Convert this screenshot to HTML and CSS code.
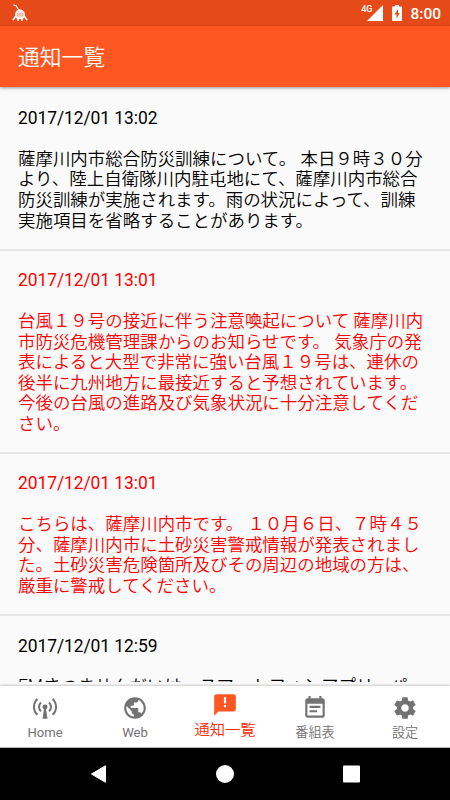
FILE: index.html
```html
<!DOCTYPE html>
<html lang="ja">

<head>

    <meta charset="UTF-8">
    <meta name="viewport" content="width=device-width, initial-scale=1.0">
    <title>通知一覧</title>

    <link rel="stylesheet" href="styles.css">

</head>

<body>

    <div class="status-bar">
        <svg class="mascot" width="16" height="18" viewBox="0 0 16 18">
            <path d="M1.5 1L4.5 2L5.5 4.5L8 6.5" fill="none" stroke="#fff" stroke-width="1.1"/>
            <path d="M3 13V10.5a5 5 0 0 1 10 0V13L11 15H5Z" fill="#fff" opacity=".9"/>
            <path d="M3.5 12.5L1 16M12.5 12.5L15 16M6.2 14V17M9.8 14V17" stroke="#fff" stroke-width="1.6"/>
            <path d="M5.8 9V12.5M8 9V12.5M10.2 9V12.5" stroke="#e64a19" stroke-width=".6"/>
        </svg>
        <div class="status-icons">
            <span class="network">4G</span>
            <svg class="signal" width="16" height="16" viewBox="0 0 16 16"><path d="M16 0V16H0Z" fill="#fff"/></svg>
            <svg class="battery" width="10" height="16" viewBox="0 0 10 16">
                <path d="M3 0H7V1.5H9Q10 1.5 10 2.5V15Q10 16 9 16H1Q0 16 0 15V2.5Q0 1.5 1 1.5H3Z" fill="#fff"/>
                <path d="M6 4L2.5 9.5H4.5V13.5L7.8 8H6Z" fill="#e64a19"/>
            </svg>
            <span class="clock">8:00</span>
        </div>
    </div>

    <header class="app-bar">
        <h1>通知一覧</h1>
    </header>

    <main class="notices">
        <article class="notice">
            <time>2017/12/01 13:02</time>
            <p>薩摩川内市総合防災訓練について。 本日９時３０分<br>より、陸上自衛隊川内駐屯地にて、薩摩川内市総合<br>防災訓練が実施されます。雨の状況によって、訓練<br>実施項目を省略することがあります。</p>
        </article>
        <article class="notice alert">
            <time>2017/12/01 13:01</time>
            <p>台風１９号の接近に伴う注意喚起について 薩摩川内<br>市防災危機管理課からのお知らせです。 気象庁の発<br>表によると大型で非常に強い台風１９号は、連休の<br>後半に九州地方に最接近すると予想されています。<br>今後の台風の進路及び気象状況に十分注意してくだ<br>さい。</p>
        </article>
        <article class="notice alert">
            <time>2017/12/01 13:01</time>
            <p>こちらは、薩摩川内市です。 １０月６日、７時４５<br>分、薩摩川内市に土砂災害警戒情報が発表されまし<br>た。土砂災害危険箇所及びその周辺の地域の方は、<br>厳重に警戒してください。</p>
        </article>
        <article class="notice">
            <time>2017/12/01 12:59</time>
            <p>FMさつませんだいは、スマートフォンアプリ、パ</p>
        </article>
    </main>

    <nav class="tabs">
        <a class="tab">
            <svg width="26" height="26" viewBox="0 0 24 24">
                <path d="M11.3 11H12.7L14.3 22H9.7Z"/>
                <circle cx="12" cy="11" r="2.3"/>
                <path class="wave" d="M8.3 15a5.3 5.3 0 0 1 0-8M15.7 15a5.3 5.3 0 0 0 0-8M5 18.3a10 10 0 0 1 0-14.6M19 18.3a10 10 0 0 0 0-14.6"/>
            </svg>
            <span class="latin">Home</span>
        </a>
        <a class="tab">
            <svg width="26" height="26" viewBox="0 0 24 24"><path d="M12 2C6.48 2 2 6.48 2 12s4.48 10 10 10 10-4.48 10-10S17.52 2 12 2zm-1 17.93c-3.95-.49-7-3.85-7-7.93 0-.62.08-1.21.21-1.79L9 15v1c0 1.1.9 2 2 2v1.93zm6.9-2.54c-.26-.81-1-1.39-1.9-1.39h-1v-3c0-.55-.45-1-1-1H8v-2h2c.55 0 1-.45 1-1V7h2c1.1 0 2-.9 2-2v-.41c2.93 1.19 5 4.06 5 7.41 0 2.08-.8 3.97-2.1 5.39z"/></svg>
            <span class="latin">Web</span>
        </a>
        <a class="tab active">
            <svg width="26" height="26" viewBox="0 0 24 24"><path d="M20 2H4c-1.1 0-1.99.9-1.99 2L2 22l4-4h14c1.1 0 2-.9 2-2V4c0-1.1-.9-2-2-2zm-7 12h-2v-2h2v2zm0-3.500h-2V4.500h2v6z"/></svg>
            <span>通知一覧</span>
        </a>
        <a class="tab">
            <svg width="26" height="26" viewBox="0 0 24 24"><path d="M17 10H7v2h10v-2zm2-7h-1V1h-2v2H8V1H6v2H5c-1.11 0-1.99.9-1.99 2L3 19c0 1.1.89 2 2 2h14c1.1 0 2-.9 2-2V5c0-1.1-.9-2-2-2zm0 16H5V8h14v11zm-5-5H7v2h7v-2z"/></svg>
            <span>番組表</span>
        </a>
        <a class="tab">
            <svg width="26" height="26" viewBox="0 0 24 24"><path d="M19.43 12.98c.04-.32.07-.64.07-.98s-.03-.66-.07-.98l2.11-1.65c.19-.15.24-.42.12-.64l-2-3.46c-.12-.22-.39-.3-.61-.22l-2.49 1c-.52-.4-1.08-.73-1.69-.98l-.38-2.65C14.46 2.18 14.25 2 14 2h-4c-.25 0-.46.18-.49.42l-.38 2.65c-.61.25-1.17.59-1.69.98l-2.49-1c-.23-.09-.49 0-.61.22l-2 3.46c-.13.22-.07.49.12.64l2.11 1.65c-.04.32-.07.65-.07.98s.03.66.07.98l-2.11 1.65c-.19.15-.24.42-.12.64l2 3.46c.12.22.39.3.61.22l2.49-1c.52.4 1.08.73 1.69.98l.38 2.65c.03.24.24.42.49.42h4c.25 0 .46-.18.49-.42l.38-2.65c.61-.25 1.17-.59 1.69-.98l2.49 1c.23.09.49 0 .61-.22l2-3.46c.12-.22.07-.49-.12-.64l-2.11-1.65zM12 15.5c-1.93 0-3.5-1.57-3.5-3.5s1.57-3.5 3.5-3.5 3.5 1.57 3.5 3.5-1.57 3.5-3.5 3.5z"/></svg>
            <span>設定</span>
        </a>
    </nav>

    <div class="system-bar">
        <svg width="18" height="20" viewBox="0 0 18 20"><path d="M1.5 10L15.5 1.7V18.3Z" fill="#fff" stroke="#fff" stroke-linejoin="round"/></svg>
        <svg width="18" height="18" viewBox="0 0 18 18"><circle cx="9" cy="9" r="9" fill="#fff"/></svg>
        <svg width="18" height="18" viewBox="0 0 18 18"><rect x="1" y=".5" width="17" height="17" rx="1" fill="#fff"/></svg>
    </div>

</body>

</html>
```
FILE: styles.css
```css
html,
body {
    height: 100%;
    margin: 0;
    overflow: hidden;
}

body {
    display: flex;
    flex-direction: column;
    background-color: #fafafa;
    color: #000;
    font-family: Roboto, "Noto Sans CJK JP", sans-serif;
}

.status-bar {
    height: 26px;
    flex: none;
    box-sizing: border-box;
    display: flex;
    justify-content: space-between;
    padding: 4px 9px 0 12px;
    background-color: #e64a19;
    color: #fff;
}

.status-icons {
    display: flex;
    align-items: flex-start;
}

.network {
    font-size: 9px;
    line-height: 10px;
    font-weight: 500;
    margin-right: -5px;
}

.signal {
    margin-top: 1px;
}

.battery {
    margin: 1px 8px 0 9px;
}

.clock {
    font-size: 15.5px;
    line-height: 20px;
    font-weight: 500;
}

.app-bar {
    height: 61px;
    flex: none;
    display: flex;
    align-items: center;
    padding: 0 18px;
    background-color: #ff5722;
    color: #fff;
    box-shadow: 0 1px 3px rgba(0, 0, 0, 0.4);
    z-index: 1;
}

.app-bar h1 {
    margin: -2px 0 0;
    font-size: 21.8px;
    font-weight: 350;
}

.notices {
    height: 595px;
    flex: none;
    box-sizing: border-box;
    padding-top: 1.4px;
    overflow: hidden;
}

.notice {
    padding: 19.6px 18px 17.4px;
    border-bottom: 2px solid #e5e5e5;
    font-size: 17.47px;
    line-height: 20.6px;
    white-space: nowrap;
}

.notice time {
    display: block;
    letter-spacing: -0.08px;
}

.notice p {
    margin: 20.2px 0 0;
    font-weight: 350;
}

.notice.alert {
    color: #f00;
}

.tabs {
    height: 62px;
    flex: none;
    box-sizing: border-box;
    display: flex;
    margin-top: 4px;
    background-color: #fff;
    border-bottom: 1px solid #b5b5b5;
    box-shadow: 0 -1px 2px rgba(0, 0, 0, 0.2);
}

.tab {
    flex: 1;
    display: flex;
    flex-direction: column;
    align-items: center;
    padding-top: 9px;
    color: #737373;
    font-size: 13.1px;
    font-weight: 350;
}

.tab svg {
    fill: currentColor;
}

.tab span {
    line-height: 20px;
    margin-top: 2px;
}

.tab .latin {
    font-weight: 400;
}

.tab .wave {
    fill: none;
    stroke: currentColor;
    stroke-width: 1.9;
}

.tab.active {
    padding-top: 6px;
    color: #ff2a00;
    font-size: 15.3px;
}

.tab.active svg {
    fill: #ff5722;
}

.system-bar {
    flex: 1;
    display: flex;
    align-items: center;
    justify-content: space-between;
    padding: 0 90px;
    background-color: #000;
}
```
